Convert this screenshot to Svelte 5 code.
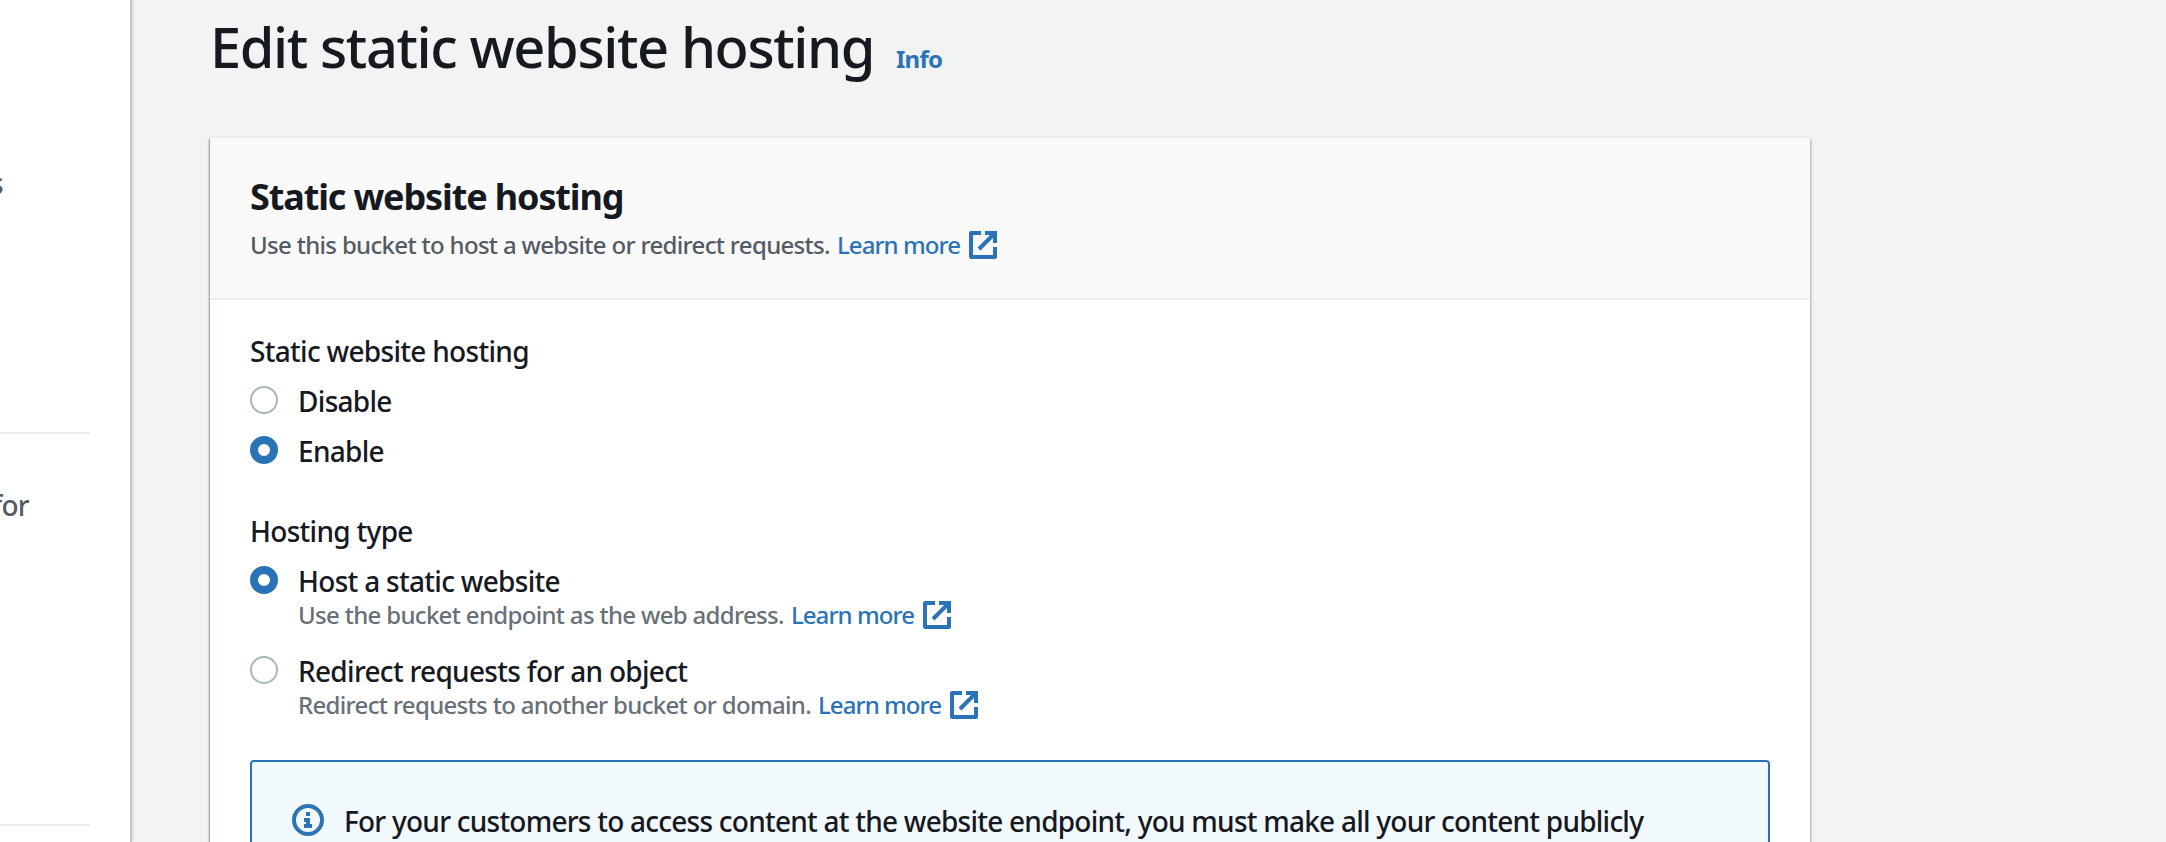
<script>
  let hosting = $state('enable');
  let hostingType = $state('host');

  const states = [
    { value: 'disable', label: 'Disable' },
    { value: 'enable', label: 'Enable' }
  ];
  const types = [
    { value: 'host', label: 'Host a static website', text: 'Use the bucket endpoint as the web address.' },
    { value: 'redirect', label: 'Redirect requests for an object', text: 'Redirect requests to another bucket or domain.' }
  ];
</script>

{#snippet learnMore()}
  <a class="link" href="#learn">
    <span>Learn more</span>
    <svg class="external" viewBox="0 0 28 28" fill="none" stroke="currentColor" stroke-width="4">
      <path d="M12 2H2v24h24V16" stroke-linejoin="round" />
      <path d="M16 2h10v10" />
      <path d="M25 3 10 18" />
    </svg>
  </a>
{/snippet}

{#snippet radio(checked)}
  <span class="radio" class:checked></span>
{/snippet}

<div class="page">
  <aside>
    <div class="section first"><span>s</span></div>
    <div class="section second"><span>for</span></div>
  </aside>

  <main>
    <header class="title">
      <h1>Edit static website hosting</h1>
      <a class="info" href="#info">Info</a>
    </header>

    <section class="card">
      <div class="card-head">
        <h2>Static website hosting</h2>
        <p class="desc"><span>Use this bucket to host a website or redirect requests.</span>{@render learnMore()}</p>
      </div>
      <div class="card-body">
        <div class="field">
          <div class="label">Static website hosting</div>
          {#each states as s}
            <button class="option" onclick={() => (hosting = s.value)}>
              {@render radio(hosting === s.value)}
              <span class="text">{s.label}</span>
            </button>
          {/each}
        </div>
        <div class="field types">
          <div class="label">Hosting type</div>
          {#each types as t}
            <div class="choice">
              <button class="option" onclick={() => (hostingType = t.value)}>
                {@render radio(hostingType === t.value)}
                <span class="text">{t.label}</span>
              </button>
              <p class="desc hint"><span>{t.text}</span>{@render learnMore()}</p>
            </div>
          {/each}
        </div>
        <div class="alert">
          <svg class="info-icon" viewBox="0 0 32 32">
            <circle cx="16" cy="16" r="14" fill="none" stroke="currentColor" stroke-width="4" />
            <path d="M14 8h4v4h-4zM12 14h6v6h2v4h-8v-4h2v-2h-2z" fill="currentColor" />
          </svg>
          <span>For your customers to access content at the website endpoint, you must make all your content publicly</span>
        </div>
      </div>
    </section>
  </main>
</div>

<style>
  :global(body) { margin: 0; overflow: hidden; }
  * { box-sizing: border-box; }
  .page {
    display: flex;
    width: 100%;
    height: 842px;
    overflow: hidden;
    background: #f2f3f3;
    color: #16191f;
    font: 500 28px/40px "Noto Sans", sans-serif;
    letter-spacing: -0.7px;
    white-space: nowrap;
  }
  aside {
    flex: none;
    width: 132px;
    background: #fff;
    border-right: 2px solid #c0c5c9;
    box-shadow: 1px 0 3px rgba(0, 28, 36, 0.12);
    color: #545b64;
  }
  .section {
    display: flex;
    justify-content: flex-end;
    width: 90px;
    border-bottom: 2px solid #eaeded;
  }
  .first { height: 434px; padding: 163px 87px 0 0; }
  .second { height: 392px; padding: 51px 61px 0 0; }
  main { flex: none; width: 1680px; padding: 12px 0 0 78px; }
  .title {
    display: flex;
    align-items: baseline;
    gap: 22px;
    height: 126px;
  }
  h1, h2, p { margin: 0; }
  h1 { font-size: 56px; line-height: 68px; font-weight: 500; letter-spacing: -1.4px; }
  a { color: #2b73b7; text-decoration: none; }
  .info { font-size: 24px; font-weight: 700; letter-spacing: -0.8px; }
  .card {
    width: 1600px;
    height: 760px;
    background: #fff;
    box-shadow: 0 -2px 0 #eaeded, 0 2px 2px rgba(0, 28, 36, 0.3), 1px 1px 3px rgba(0, 28, 36, 0.2), -1px 1px 2px rgba(0, 28, 36, 0.3);
  }
  .card-head {
    height: 162px;
    padding: 37px 40px 0;
    background: #fafafa;
    border-bottom: 2px solid #eaeded;
  }
  h2 { font-size: 36px; line-height: 44px; letter-spacing: -1.13px; }
  .desc {
    display: flex;
    gap: 7px;
    height: 30px;
    font-size: 24px;
    line-height: 30px;
    letter-spacing: -0.68px;
    color: #545b64;
  }
  .card-head .desc { margin-top: 11px; }
  .link { display: flex; align-items: center; gap: 9px; letter-spacing: -0.95px; }
  .external { width: 28px; height: 28px; }
  .card-body { padding: 30px 40px 0; }
  .field { display: flex; flex-direction: column; gap: 10px; }
  .label { height: 40px; padding-top: 1px; }
  .types { margin-top: 40px; }
  .option {
    display: flex;
    align-items: center;
    gap: 20px;
    height: 40px;
    padding: 0;
    border: 0;
    background: none;
    color: inherit;
    font: inherit;
    letter-spacing: inherit;
  }
  .text { padding-top: 2px; }
  .radio {
    width: 28px;
    height: 28px;
    border: 2px solid #aab7b8;
    border-radius: 50%;
    background: #fff;
  }
  .radio.checked { border: 8px solid #2b73b7; }
  .choice + .choice { margin-top: 10px; }
  .hint { padding-left: 48px; color: #687078; }
  .alert {
    display: flex;
    gap: 20px;
    height: 140px;
    margin-top: 40px;
    padding: 39px 40px;
    border: 2px solid #2b73b7;
    border-radius: 4px;
    background: #f2f9fd;
    letter-spacing: -0.76px;
  }
  .info-icon { width: 32px; height: 32px; margin-top: 3px; color: #2b73b7; }
</style>
